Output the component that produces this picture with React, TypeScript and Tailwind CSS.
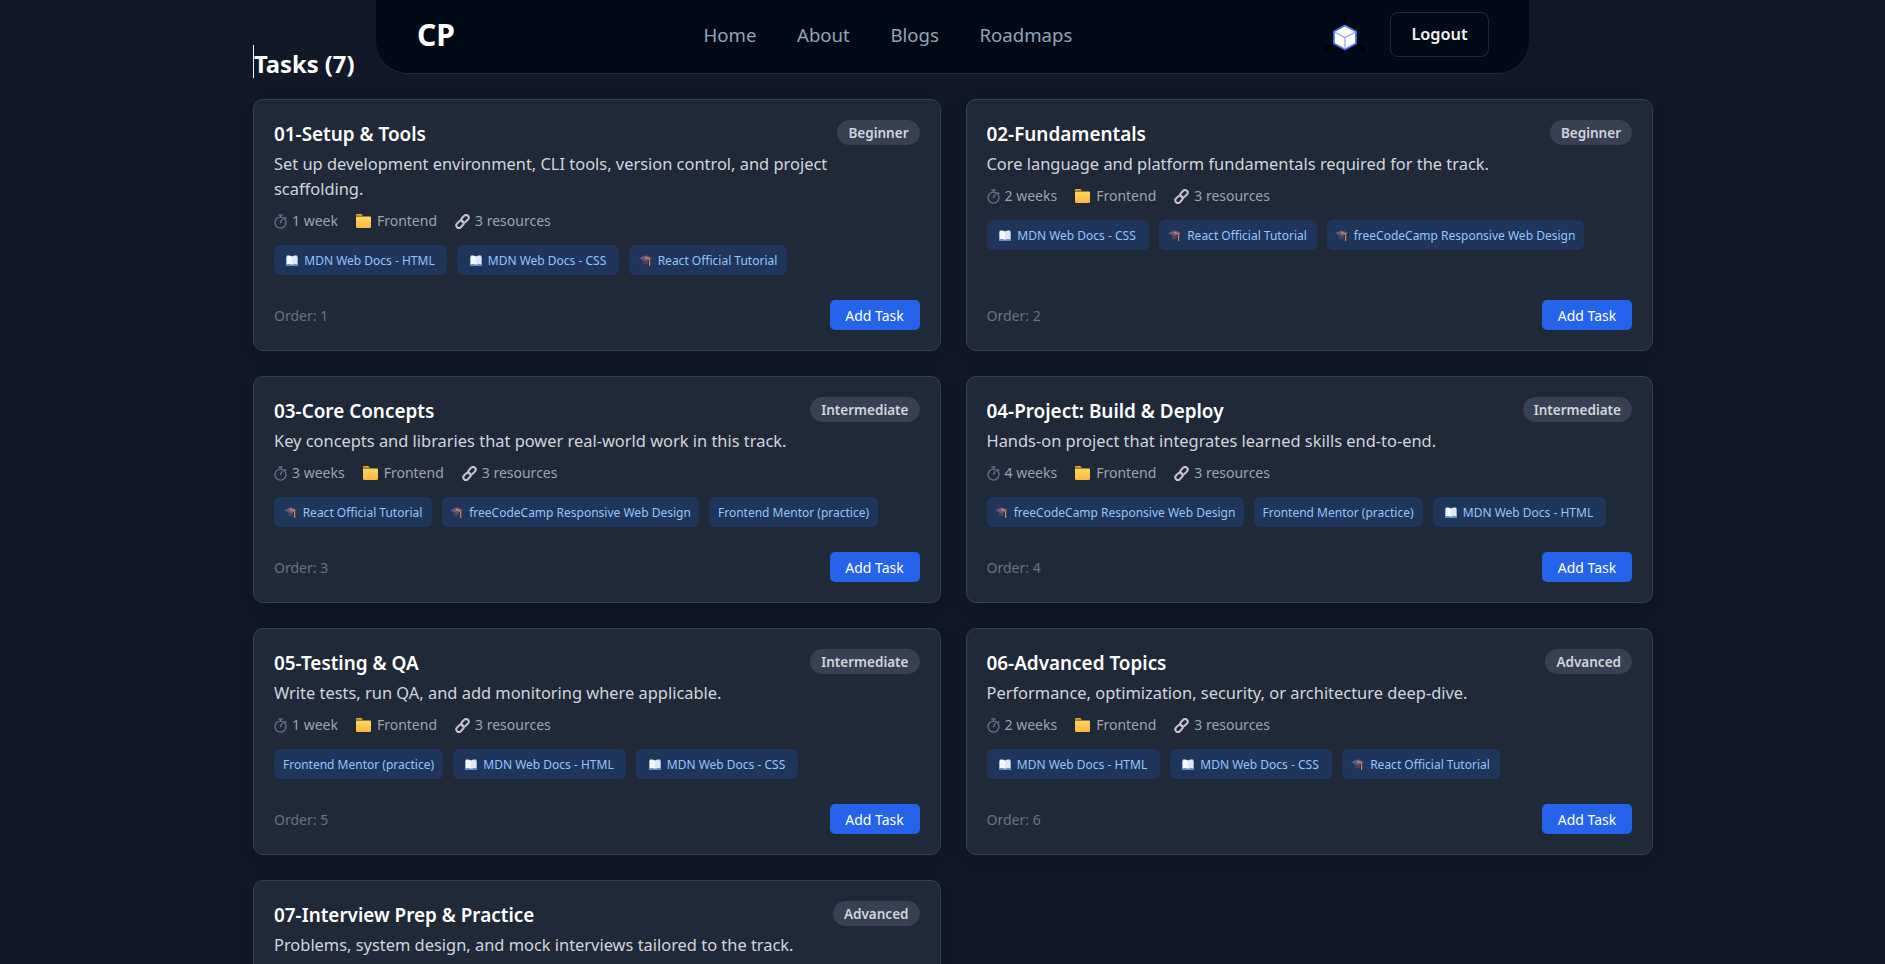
import React from "react";

function Stopwatch() {
  return (
    <svg width="13" height="15" viewBox="0 0 13 15" fill="none" stroke="#5f7488" strokeWidth="1.3" strokeLinecap="round" className="shrink-0">
      <circle cx="6.5" cy="8.6" r="5.5" />
      <path d="M4.8 1h3.4M6.5 1v2M6.5 8.6l1.6-3.2M11 3.4l.8.8" />
    </svg>
  );
}

function Folder() {
  return (
    <svg width="15" height="14" viewBox="0 0 15 14" className="shrink-0">
      <defs>
        <linearGradient id="folderFill" x1="0" y1="0" x2="0" y2="1">
          <stop offset="0" stopColor="#ffd75e" />
          <stop offset="1" stopColor="#feb63f" />
        </linearGradient>
      </defs>
      <path d="M0 1.2C0 .5.5 0 1.2 0h3.6c.5 0 .9.2 1.2.6l1 1.2H0z" fill="#f5a524" />
      <path d="M0 2.4h13.8c.7 0 1.2.5 1.2 1.2v9.2c0 .7-.5 1.2-1.2 1.2H1.2C.5 14 0 13.5 0 12.8z" fill="url(#folderFill)" />
    </svg>
  );
}

function Chain() {
  return (
    <svg width="15" height="15" viewBox="0 0 15 15" fill="none" stroke="#c8c3d3" strokeWidth="2" className="shrink-0">
      <rect x="7.4" y="0.6" width="5.2" height="8.2" rx="2.6" transform="rotate(45 10 4.7)" />
      <rect x="2.4" y="6.2" width="5.2" height="8.2" rx="2.6" transform="rotate(45 5 10.3)" />
    </svg>
  );
}

function Book() {
  return (
    <svg width="12" height="11" viewBox="0 0 12 11" className="shrink-0">
      <path d="M0 2h12v9H0z" fill="#5a8fc9" />
      <path d="M.6.8C2.5.2 4.6.4 6 1.4v8.4C4.6 9 2.5 8.8.6 9.3z" fill="#f4f7fb" />
      <path d="M11.4.8C9.5.2 7.4.4 6 1.4v8.4c1.4-.8 3.5-1 5.4-.5z" fill="#dfe8f2" />
    </svg>
  );
}

function Cap() {
  return (
    <svg width="13" height="13" viewBox="0 0 13 13" className="shrink-0">
      <path d="M3.6 6h5.4v3.4L6.4 10.6 3.6 9.4z" fill="#4a3f5c" />
      <path d="M0 4.2 6.6 1.2 13 3.8 6.8 7.2z" fill="#6a5a80" />
      <circle cx="7" cy="3.6" r="0.9" fill="#d8a03c" />
      <path d="M7 3.6 10.6 5V12" fill="none" stroke="#d9823f" strokeWidth="1.2" />
    </svg>
  );
}

function Cube() {
  return (
    <svg width="48" height="40" viewBox="0 0 48 40" fill="none" className="shrink-0">
      <g stroke="#000000" strokeWidth="1.6">
        <path d="M24 11V1M21.5 3.5 24 1l2.5 2.5" />
        <path d="M12 29 5 34.5M4.8 31V34.8H8.6" />
        <path d="M36 29l7 5.5M43.2 31V34.8H39.4" />
      </g>
      <path d="M24 10.5 35 16.5v12L24 34.5 13 28.5v-12z" fill="#ffffff" stroke="#4f6ef7" strokeWidth="1.7" strokeLinejoin="round" />
      <path d="M13.5 17 24 22.5 34.5 17M24 22.5V34" stroke="#8ba0fb" strokeWidth="1.2" />
    </svg>
  );
}

type Res = { icon?: "book" | "cap"; t: string; w: string };
type Task = { title: string; level: string; desc: string; dur: string; res: Res[]; order: number };

const html: Res = { icon: "book", t: "MDN Web Docs - HTML", w: "w-[173px]" };
const css: Res = { icon: "book", t: "MDN Web Docs - CSS", w: "w-[162px]" };
const react: Res = { icon: "cap", t: "React Official Tutorial", w: "w-[158px]" };
const fcc: Res = { icon: "cap", t: "freeCodeCamp Responsive Web Design", w: "w-[257px]" };
const fem: Res = { t: "Frontend Mentor (practice)", w: "w-[169px]" };

const tasks: Task[] = [
  { title: "01-Setup & Tools", level: "Beginner", desc: "Set up development environment, CLI tools, version control, and project scaffolding.", dur: "1 week", res: [html, css, react], order: 1 },
  { title: "02-Fundamentals", level: "Beginner", desc: "Core language and platform fundamentals required for the track.", dur: "2 weeks", res: [css, react, fcc], order: 2 },
  { title: "03-Core Concepts", level: "Intermediate", desc: "Key concepts and libraries that power real-world work in this track.", dur: "3 weeks", res: [react, fcc, fem], order: 3 },
  { title: "04-Project: Build & Deploy", level: "Intermediate", desc: "Hands-on project that integrates learned skills end-to-end.", dur: "4 weeks", res: [fcc, fem, html], order: 4 },
  { title: "05-Testing & QA", level: "Intermediate", desc: "Write tests, run QA, and add monitoring where applicable.", dur: "1 week", res: [fem, html, css], order: 5 },
  { title: "06-Advanced Topics", level: "Advanced", desc: "Performance, optimization, security, or architecture deep-dive.", dur: "2 weeks", res: [html, css, react], order: 6 },
  { title: "07-Interview Prep & Practice", level: "Advanced", desc: "Problems, system design, and mock interviews tailored to the track.", dur: "3 weeks", res: [react, fcc, fem], order: 7 },
];

function Card({ t }: { t: Task }) {
  return (
    <div className="flex flex-col rounded-[10px] border border-[#374151] bg-[#1f2937] px-5 pt-5 pb-5 shadow-[0_4px_16px_rgba(0,0,0,0.2)]">
      <div className="flex items-start justify-between">
        <div className="text-[18.9px] font-semibold leading-[28px] text-white">{t.title}</div>
        <span className="rounded-full bg-[#374151] px-[11px] pt-[4px] pb-[2px] text-[13.5px] font-semibold leading-[19px] text-[#d1d5db]">{t.level}</span>
      </div>
      <p className="mt-[3px] pr-2 text-[16.42px] leading-[25px] text-[#d1d5db]">{t.desc}</p>
      <div className="mt-[10px] flex items-center gap-[18px] text-[14px] leading-[20px] text-[#9ca3af]">
        <span className="flex items-center gap-[5px]"><Stopwatch />{t.dur}</span>
        <span className="flex items-center gap-[6px]"><Folder />Frontend</span>
        <span className="flex items-center gap-[5px]"><Chain />3 resources</span>
      </div>
      <div className="mt-[14px] flex flex-wrap gap-[10px]">
        {t.res.map((r) => (
          <span key={r.t} className={"flex h-[30px] items-center justify-center gap-[6px] rounded-[6px] bg-[#1f355b] pt-[1px] text-[12px] leading-[18px] text-[#93c5fd] " + r.w}>
            {r.icon === "book" && <Book />}
            {r.icon === "cap" && <Cap />}
            {r.t}
          </span>
        ))}
      </div>
      <div className="mt-auto flex items-center justify-between pt-[25px]">
        <span className="text-[14px] text-[#6b7280]">Order: {t.order}</span>
        <button className="h-[30px] w-[90px] rounded-[5px] bg-[#2563eb] text-[14px] font-normal text-white">Add Task</button>
      </div>
    </div>
  );
}

export default function App() {
  return (
    <div className="h-[964px] overflow-hidden bg-[#111827] font-['Noto_Sans','Open_Sans',sans-serif]">
      <div className="relative ml-[253px] w-[1400px]">
        <nav className="absolute left-[123px] top-0 z-10 flex h-[74px] w-[1153px] items-center justify-between rounded-b-[32px] border-b border-[#1f2937] bg-[#030a17] pr-[40px] pl-[41px] pb-[4px]">
          <span className="text-[30px] font-bold text-white">CP</span>
          <div className="flex gap-[40.6px] text-[18.6px] text-[#94a3b8]">
            <span>Home</span><span>About</span><span>Blogs</span><span>Roadmaps</span>
          </div>
          <div className="flex items-center gap-[21px]">
            <Cube />
            <button className="h-[45px] w-[99px] rounded-[8px] border border-[#1f2937] text-[16.3px] font-semibold text-[#f3f4f6]">Logout</button>
          </div>
        </nav>
        <div className="pt-[45px]">
          <h2 className="mb-[21px] h-[33px] border-l border-white text-[23.75px] font-bold leading-[38px] text-white">Tasks (7)</h2>
          <div className="grid grid-cols-2 gap-x-[25px] gap-y-[25px]">
            {tasks.map((t) => <Card key={t.title} t={t} />)}
          </div>
        </div>
      </div>
    </div>
  );
}
